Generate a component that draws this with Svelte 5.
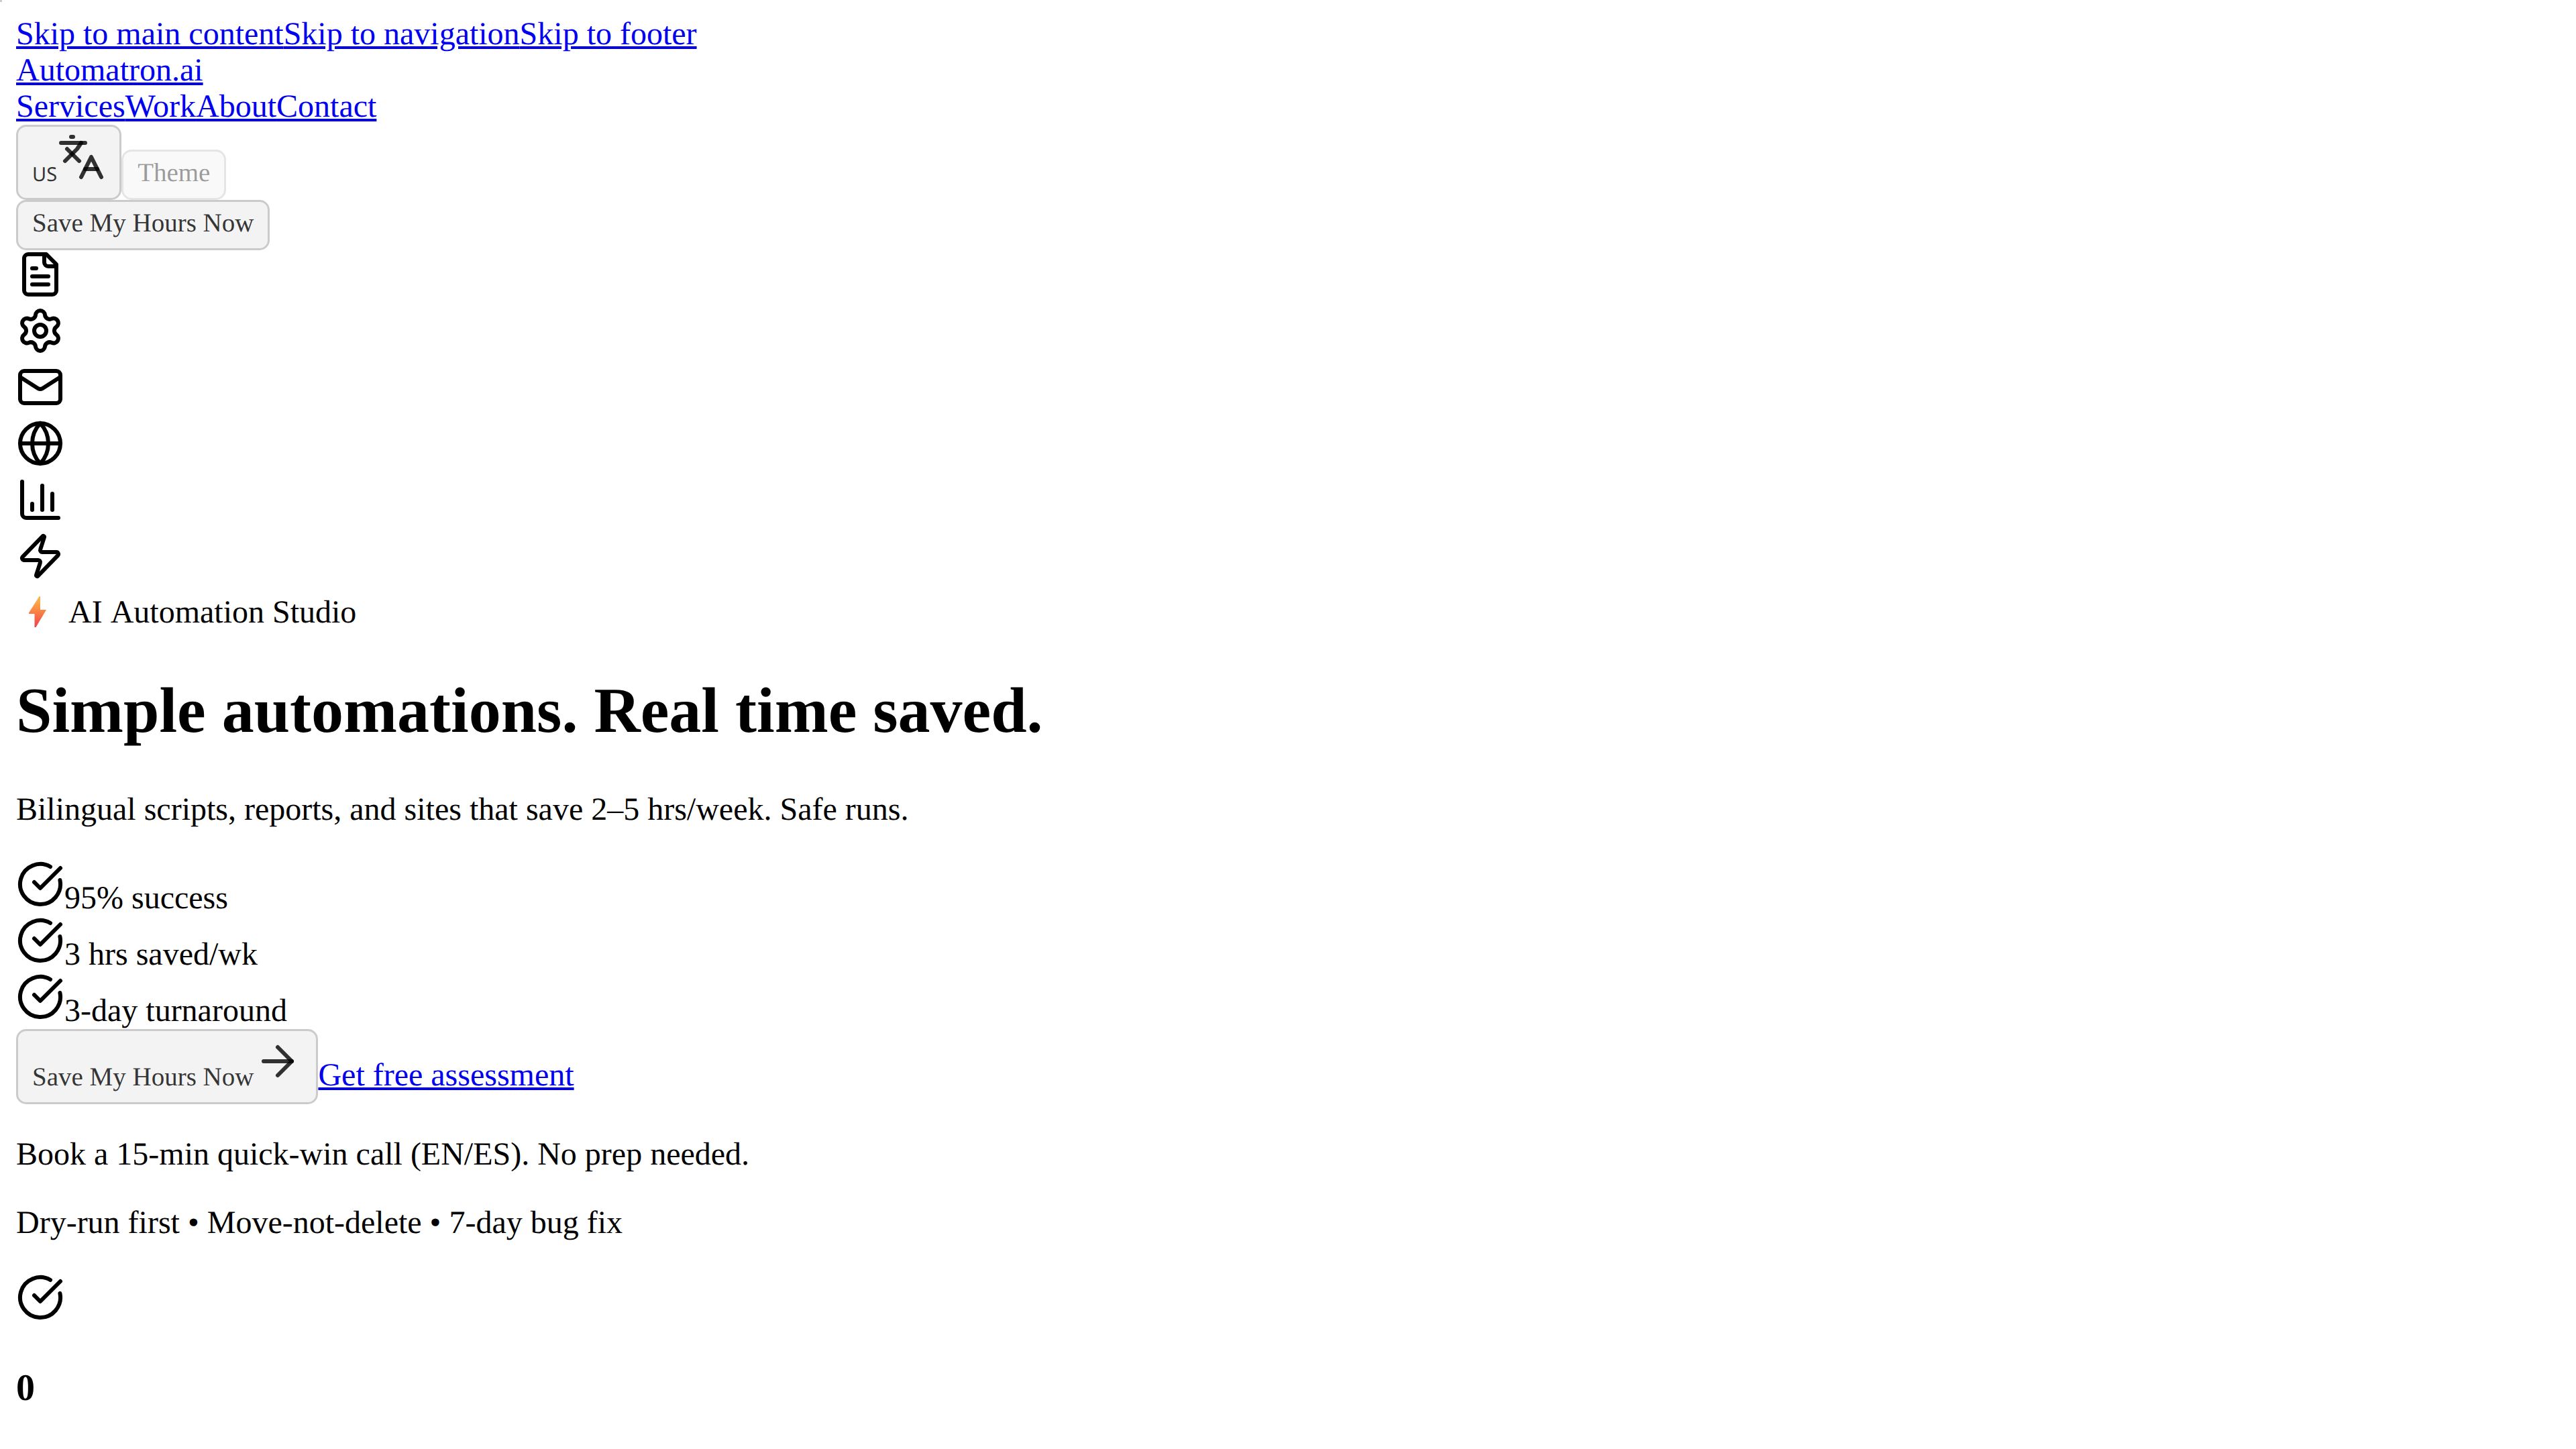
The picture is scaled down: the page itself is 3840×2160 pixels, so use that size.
<script>
  const skips = [
    ['#main', 'Skip to main content'],
    ['#nav', 'Skip to navigation'],
    ['#footer', 'Skip to footer'],
  ];
  const links = [
    ['#services', 'Services'],
    ['#work', 'Work'],
    ['#about', 'About'],
    ['#contact', 'Contact'],
  ];
  const icons = {
    file: ['M15 2H6a2 2 0 0 0-2 2v16a2 2 0 0 0 2 2h12a2 2 0 0 0 2-2V7Z', 'M14 2v4a2 2 0 0 0 2 2h4', 'M10 9H8', 'M16 13H8', 'M16 17H8'],
    settings: [
      'M9.671 4.136a2.34 2.34 0 0 1 4.659 0 2.34 2.34 0 0 0 3.319 1.915 2.34 2.34 0 0 1 2.33 4.033 2.34 2.34 0 0 0 0 3.831 2.34 2.34 0 0 1-2.33 4.033 2.34 2.34 0 0 0-3.319 1.915 2.34 2.34 0 0 1-4.659 0 2.34 2.34 0 0 0-3.32-1.915 2.34 2.34 0 0 1-2.33-4.033 2.34 2.34 0 0 0 0-3.831A2.34 2.34 0 0 1 6.35 6.051a2.34 2.34 0 0 0 3.319-1.915',
      'M15 12a3 3 0 1 1-6 0a3 3 0 1 1 6 0Z',
    ],
    mail: ['m22 7-8.991 5.727a2 2 0 0 1-2.009 0L2 7', 'M4 4h16a2 2 0 0 1 2 2v12a2 2 0 0 1-2 2H4a2 2 0 0 1-2-2V6a2 2 0 0 1 2-2Z'],
    globe: ['M22 12a10 10 0 1 1-20 0a10 10 0 1 1 20 0Z', 'M12 2a14.5 14.5 0 0 0 0 20 14.5 14.5 0 0 0 0-20', 'M2 12h20'],
    chart: ['M3 3v16a2 2 0 0 0 2 2h16', 'M18 17V9', 'M13 17V5', 'M8 17v-3'],
    zap: ['M4 14a1 1 0 0 1-.78-1.63l9.9-10.2a.5.5 0 0 1 .86.46l-1.92 6.02A1 1 0 0 0 13 10h7a1 1 0 0 1 .78 1.63l-9.9 10.2a.5.5 0 0 1-.86-.46l1.92-6.02A1 1 0 0 0 11 14z'],
    check: ['M21.801 10A10 10 0 1 1 17 3.335', 'm9 11 3 3L22 4'],
    arrow: ['M5 12h14', 'm12 5 7 7-7 7'],
    translate: ['m5 8 6 6', 'm4 14 6-6 2-3', 'M2 5h12', 'M7 2h1', 'm22 22-5-10-5 10', 'M14 18h6'],
  };
  const floating = ['file', 'settings', 'mail', 'globe', 'chart', 'zap'];
  const proofs = ['95% success', '3 hrs saved/wk', '3-day turnaround'];
</script>

{#snippet icon(name)}
  <svg class="icon" viewBox="0 0 24 24" aria-hidden="true">
    {#each icons[name] as d}<path {d} />{/each}
  </svg>
{/snippet}

<div class="page">
  <span class="marker" aria-hidden="true"></span>
  <div class="row">{#each skips as [href, label]}<a {href}>{label}</a>{/each}</div>
  <header>
    <div class="row"><a href="#home">Automatron.ai</a></div>
    <nav class="row" id="nav">{#each links as [href, label]}<a {href}>{label}</a>{/each}</nav>
    <div><button type="button" aria-label="Switch language"><span class="flag">US</span>{@render icon('translate')}</button><button type="button" disabled>Theme</button></div>
    <div><button type="button">Save My Hours Now</button></div>
  </header>
  <main id="main">
    {#each floating as name}
      <div class="row">{@render icon(name)}</div>
    {/each}
    <div class="badge">
      <svg class="bolt" viewBox="0 0 64 52" aria-hidden="true">
        <defs>
          <linearGradient id="bolt" x1="0" y1="0" x2="0" y2="1">
            <stop offset="0.1" stop-color="#fbb04a" />
            <stop offset="0.5" stop-color="#fa8244" />
            <stop offset="1" stop-color="#ee4150" />
          </linearGradient>
        </defs>
        <path fill="url(#bolt)" d="M34.5 2H36V22H45L29.5 48H27.5V28H19V26.500Z" />
      </svg><span>AI Automation Studio</span>
    </div>
    <h1>Simple automations. Real time saved.</h1>
    <p>Bilingual scripts, reports, and sites that save 2–5 hrs/week. Safe runs.</p>
    {#each proofs as text}
      <div class="row">{@render icon('check')}<span>{text}</span></div>
    {/each}
    <div><button type="button">Save My Hours Now{@render icon('arrow')}</button><a href="#assessment">Get free assessment</a></div>
    <p>Book a 15-min quick-win call (EN/ES). No prep needed.</p>
    <p>Dry-run first • Move-not-delete • 7-day bug fix</p>
    <div class="row">{@render icon('check')}</div>
    <h3>0</h3>
  </main>
</div>

<style>
  :global(html) {
    scrollbar-width: none;
  }
  :global(body) {
    background: #fff;
  }
  .page {
    padding: 24px;
    color: #000;
    font: 48px/53px 'Liberation Serif', 'Times New Roman', serif;
    text-rendering: geometricPrecision;
  }
  .marker {
    position: absolute;
    top: 0;
    left: 0;
    width: 3px;
    height: 3px;
    background: #cbcbcb;
  }
  .row {
    padding-bottom: 1px;
  }
  a {
    color: #0000ee;
    text-decoration: underline;
  }
  button {
    margin: 0;
    padding: 9px 21px 15px;
    border: 3px solid #cbcbcb;
    border-radius: 15px;
    background: #f3f3f3;
    color: rgba(0, 0, 0, 0.8);
    font-family: inherit;
    font-size: 39px;
    line-height: 45px;
    text-rendering: inherit;
  }
  button:disabled {
    border-color: #e5e5e5;
    background: #f9f9f9;
    color: rgba(0, 0, 0, 0.4);
  }
  .flag {
    font-family: 'Noto Sans', sans-serif;
    font-size: 29px;
    line-height: 1;
  }
  .icon {
    width: 72px;
    height: 72px;
    fill: none;
    stroke: currentColor;
    stroke-width: 2;
    stroke-linecap: round;
    stroke-linejoin: round;
  }
  .badge {
    display: flex;
    align-items: center;
    gap: 14px;
    padding: 9px 0 2px;
    font-kerning: none;
  }
  .bolt {
    width: 64px;
    height: 52px;
  }
  h1 {
    margin: 64px 0;
    padding-bottom: 4px;
    font-size: 96px;
    line-height: 107px;
  }
  p {
    margin: 48px 0;
    padding-bottom: 1px;
  }
  h3 {
    margin: 56px 0;
    font-size: 56px;
    line-height: 63px;
  }
</style>
